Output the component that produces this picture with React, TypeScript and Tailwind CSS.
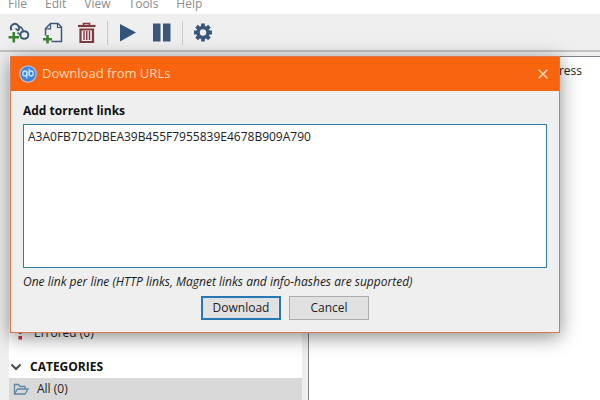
import { useState } from 'react'
import { X } from 'lucide-react'

const menus = ['File', 'Edit', 'View', 'Tools', 'Help']

function AddLinkIcon() {
  return (
    <svg viewBox="0 0 22 22" className="size-[22px]" fill="none">
      <g stroke="#3c5878" strokeWidth="2">
        <path d="M3.600 8.200A4 4 0 1 1 9.800 8.800" />
        <path d="M9.500 10.500l3.500 3M7.500 6.500l2.500 2.200" strokeWidth="1.600" />
        <path d="M10.800 4.500c2.600.6 4.400 2.600 4 5.200" strokeWidth="1.600" />
        <ellipse cx="16.300" cy="13" rx="4" ry="3.800" />
      </g>
      <path d="M5.800 10v10.500M.5 15.200h10.500" stroke="#37862f" strokeWidth="2.600" />
    </svg>
  )
}

function AddFileIcon() {
  return (
    <svg viewBox="0 0 22 22" className="size-[22px]" fill="none">
      <path d="M3.500 13.500V6.500L8.500 1.500h7.500l3.500 3.500v14.500H9.500" stroke="#3c5878" strokeWidth="1.500" />
      <path d="M3.500 6.800h5v-5.300M15.500 1.500v4h4" stroke="#3c5878" strokeWidth="1.200" />
      <path d="M5.500 13v8.500M1 17.300h9" stroke="#37862f" strokeWidth="2.600" />
    </svg>
  )
}

function TrashIcon() {
  return (
    <svg viewBox="0 0 22 22" className="size-[22px]" fill="none" stroke="#803a3c">
      <path d="M2 4h17.500" strokeWidth="2.200" />
      <path d="M7.500 3V1.500h6V3" strokeWidth="1.600" />
      <path d="M4.500 7.500h12.500v12.500h-12.500z" strokeWidth="2.200" />
      <path d="M8 9v9M10.750 9v9M13.500 9v9" strokeWidth="1.400" />
    </svg>
  )
}

function PlayIcon() {
  return (
    <svg viewBox="0 0 22 22" className="size-[22px]" fill="#34527a">
      <path d="M3 2l16 8.500L3 19.500z" />
    </svg>
  )
}

function PauseIcon() {
  return (
    <svg viewBox="0 0 22 22" className="size-[22px]" fill="#3a5679">
      <path d="M2 1.500h7.500V19.500H2zM12 1.500h7.500V19.500H12z" />
    </svg>
  )
}

function GearIcon() {
  return (
    <svg viewBox="0 0 22 22" className="size-[22px]" fill="none" stroke="#3a5679">
      <circle cx="11" cy="10.500" r="5" strokeWidth="3.600" />
      <path
        d="M11 1.500v3M11 16.500v3M2 10.500h3M17 10.500h3M4.600 4.100l2.200 2.200M15.200 14.700l2.200 2.200M4.600 16.900l2.200-2.200M15.200 6.300l2.200-2.200"
        strokeWidth="3.800"
      />
    </svg>
  )
}

function AppLogo() {
  return (
    <svg viewBox="0 0 18 18" className="size-[18px]" fill="none">
      <circle cx="9" cy="9" r="8.200" fill="#3f86d8" stroke="#b9bfd0" strokeWidth="1.200" />
      <g stroke="#c5e4fb" strokeWidth="1.300">
        <ellipse cx="5.800" cy="8.500" rx="2" ry="2.500" />
        <path d="M7.800 5.800v7.700M10.200 3.500v7.700" />
        <ellipse cx="12.200" cy="8.500" rx="2" ry="2.500" />
      </g>
    </svg>
  )
}

function ErrorIcon() {
  return (
    <svg viewBox="0 0 16 16" className="size-4" fill="#cf2f36">
      <path d="M5.500 1h3.500l-.5 8H6zM5.500 11h3.500v3.500H5.500z" />
    </svg>
  )
}

function ChevronIcon() {
  return (
    <svg viewBox="0 0 12 12" className="size-3" fill="none" stroke="#4a4a4a" strokeWidth="2">
      <path d="M1.500 3.500L6 8l4.500-4.500" />
    </svg>
  )
}

function FolderIcon() {
  return (
    <svg viewBox="0 0 16 16" className="size-4" fill="none" stroke="#5b87a8" strokeWidth="1.300">
      <path d="M1.500 13V3.500h4l1.500 2h5v2.500" />
      <path d="M1.500 13L4.500 8h10.500l-3 5z" />
    </svg>
  )
}

function ToolButton({ label, children }: { label: string; children: React.ReactNode }) {
  return (
    <button aria-label={label} className="flex w-[34px] shrink-0 items-center justify-center">
      {children}
    </button>
  )
}

function DownloadDialog({ onClose }: { onClose: () => void }) {
  const [links, setLinks] = useState('A3A0FB7D2DBEA39B455F7955839E4678B909A790')

  return (
    <div
      role="dialog"
      aria-label="Download from URLs"
      className="absolute top-14 right-10 left-[10px] flex flex-col border border-[#d97850] bg-[#efefef] shadow-[0_4px_18px_rgba(0,0,0,0.45)]"
    >
      <div className="flex h-[34px] items-center gap-[5px] bg-[#f9640f] px-2 text-[#ffd9b8]">
        <AppLogo />
        <span className="flex-1 text-[13px]">Download from URLs</span>
        <button aria-label="Close" onClick={onClose}>
          <X size={16} strokeWidth={2} />
        </button>
      </div>

      <div className="flex flex-col px-3 pt-3 pb-3">
        <label htmlFor="links" className="text-[12px] leading-4 font-bold text-[#111]">
          Add torrent links
        </label>
        <textarea
          id="links"
          value={links}
          spellCheck={false}
          onChange={(e) => setLinks(e.target.value)}
          className="mt-[5px] h-36 resize-none border border-[#2f7f9f] bg-white px-1 py-1 text-[12px] leading-4 outline-none"
        />
        <p className="mt-[6px] text-[12px] leading-4 text-[#1b1b1b] italic">
          One link per line (HTTP links, Magnet links and info-hashes are supported)
        </p>
        <div className="mt-[6px] flex justify-center gap-2">
          <button className="h-6 w-20 border-2 border-[#2878b4] bg-[#e1e1e1] text-[12px] leading-4">
            Download
          </button>
          <button onClick={onClose} className="h-6 w-20 border border-[#adadad] bg-[#e1e1e1] text-[12px] leading-4">
            Cancel
          </button>
        </div>
      </div>
    </div>
  )
}

export default function App() {
  const [open, setOpen] = useState(true)

  return (
    <div className="relative flex h-screen flex-col overflow-hidden bg-[#efefef] font-['Open_Sans','Noto_Sans',sans-serif] text-[#222]">
      {/* Menu bar */}
      <nav className="-mt-[6px] flex h-5 shrink-0 items-center gap-[18px] bg-white px-2 text-[12px] leading-4 text-[#8c8c8c]">
        {menus.map((menu) => (
          <button key={menu}>{menu}</button>
        ))}
      </nav>

      {/* Toolbar */}
      <div className="flex h-[38px] shrink-0 items-center border-b-2 border-[#c2c2c2] bg-[#efefef] pt-[2px] pl-[2px]">
        <ToolButton label="Add torrent link"><AddLinkIcon /></ToolButton>
        <ToolButton label="Add torrent file"><AddFileIcon /></ToolButton>
        <ToolButton label="Delete"><TrashIcon /></ToolButton>
        <div className="mx-[3px] h-6 w-px bg-[#c9c9c9]" />
        <ToolButton label="Resume"><PlayIcon /></ToolButton>
        <ToolButton label="Pause"><PauseIcon /></ToolButton>
        <div className="mx-[3px] h-6 w-px bg-[#c9c9c9]" />
        <ToolButton label="Options"><GearIcon /></ToolButton>
      </div>

      {/* Sidebar and transfer list */}
      <div className="flex min-h-0 flex-1 gap-[6px] pt-1 pl-[9px]">
        <aside className="w-[293px] shrink-0 bg-white pt-[266px] text-[12px] leading-4">
          <div className="flex h-[22px] items-center gap-[5px] pl-1">
            <ErrorIcon />
            <span>Errored (0)</span>
          </div>
          <div className="mt-3 flex h-[22px] items-center gap-2 pl-[1px] font-bold text-[#111]">
            <ChevronIcon />
            <h3>CATEGORIES</h3>
          </div>
          <div className="flex h-[22px] items-center gap-2 bg-[#d9d9d9] pl-1">
            <FolderIcon />
            <span>All (0)</span>
          </div>
        </aside>
        <main className="flex-1 border-t border-l border-[#7e838a] bg-white pt-[6px] pr-[18px] text-right text-[12px] leading-4">
          Progress
        </main>
      </div>

      {open && <DownloadDialog onClose={() => setOpen(false)} />}
    </div>
  )
}
